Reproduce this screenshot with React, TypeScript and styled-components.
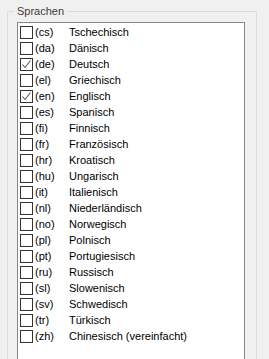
import React from "react";
import styled, { createGlobalStyle } from "styled-components";

const GlobalStyle = createGlobalStyle`
  html, body {
    margin: 0;
    padding: 0;
    background: #f0f0f0;
    overflow: hidden;
  }
  body {
    width: 269px;
    height: 359px;
    font-family: "Liberation Sans", Arial, sans-serif;
    font-size: 11px;
  }
`;

const languages = [
  { code: "cs", name: "Tschechisch" },
  { code: "da", name: "Dänisch" },
  { code: "de", name: "Deutsch", checked: true },
  { code: "el", name: "Griechisch" },
  { code: "en", name: "Englisch", checked: true },
  { code: "es", name: "Spanisch" },
  { code: "fi", name: "Finnisch" },
  { code: "fr", name: "Französisch" },
  { code: "hr", name: "Kroatisch" },
  { code: "hu", name: "Ungarisch" },
  { code: "it", name: "Italienisch" },
  { code: "nl", name: "Niederländisch" },
  { code: "no", name: "Norwegisch" },
  { code: "pl", name: "Polnisch" },
  { code: "pt", name: "Portugiesisch" },
  { code: "ru", name: "Russisch" },
  { code: "sl", name: "Slowenisch" },
  { code: "sv", name: "Schwedisch" },
  { code: "tr", name: "Türkisch" },
  { code: "zh", name: "Chinesisch (vereinfacht)" },
];

const App = () => {
  return (
    <>
      <GlobalStyle />
      <GroupBox>
        <Caption>Sprachen</Caption>
        <ListBox>
          {languages.map((lang) => (
            <Row key={lang.code}>
              <CheckBox>
                {lang.checked && (
                  <svg width="11" height="11" viewBox="0 0 11 11">
                    <polyline
                      points="1.5,5.5 4,8.5 9.5,1.5"
                      fill="none"
                      stroke="#5a5a5a"
                      strokeWidth="1.1"
                    />
                  </svg>
                )}
              </CheckBox>
              <Code>({lang.code})</Code>
              <Name>{lang.name}</Name>
            </Row>
          ))}
        </ListBox>
      </GroupBox>
    </>
  );
};

export default App;

// the group box runs on past the bottom of the window, so no bottom border
const GroupBox = styled.fieldset`
  margin: 5px 0 0 7px;
  width: 250px;
  height: 354px;
  box-sizing: border-box;
  padding: 0 11px 0 9px;
  border: 1px solid #dcdcdc;
  border-bottom: none;
  min-width: 0;
  display: flex;
  flex-direction: column;
`;

const Caption = styled.legend`
  margin-left: -3px;
  padding: 0 3px;
  line-height: 13px;
  font-size: 11px;
  color: #3c3c3c;
`;

const ListBox = styled.div`
  margin-top: 4px;
  flex: 1;
  min-height: 0;
  overflow: hidden;
  background: #ffffff;
  border: 1px solid #828790;
  border-bottom: none;
  padding: 1px 0 0 2px;
  display: flex;
  flex-direction: column;
`;

const Row = styled.div`
  height: 16px;
  flex-shrink: 0;
  display: flex;
  align-items: center;
  color: #000000;
  white-space: nowrap;
`;

const CheckBox = styled.span`
  width: 13px;
  height: 13px;
  box-sizing: border-box;
  border: 1px solid #333333;
  background: #ffffff;
  display: flex;
  align-items: center;
  justify-content: center;
  flex-shrink: 0;
`;

const Code = styled.span`
  margin-left: 2px;
  width: 34px;
  flex-shrink: 0;
`;

const Name = styled.span``;
